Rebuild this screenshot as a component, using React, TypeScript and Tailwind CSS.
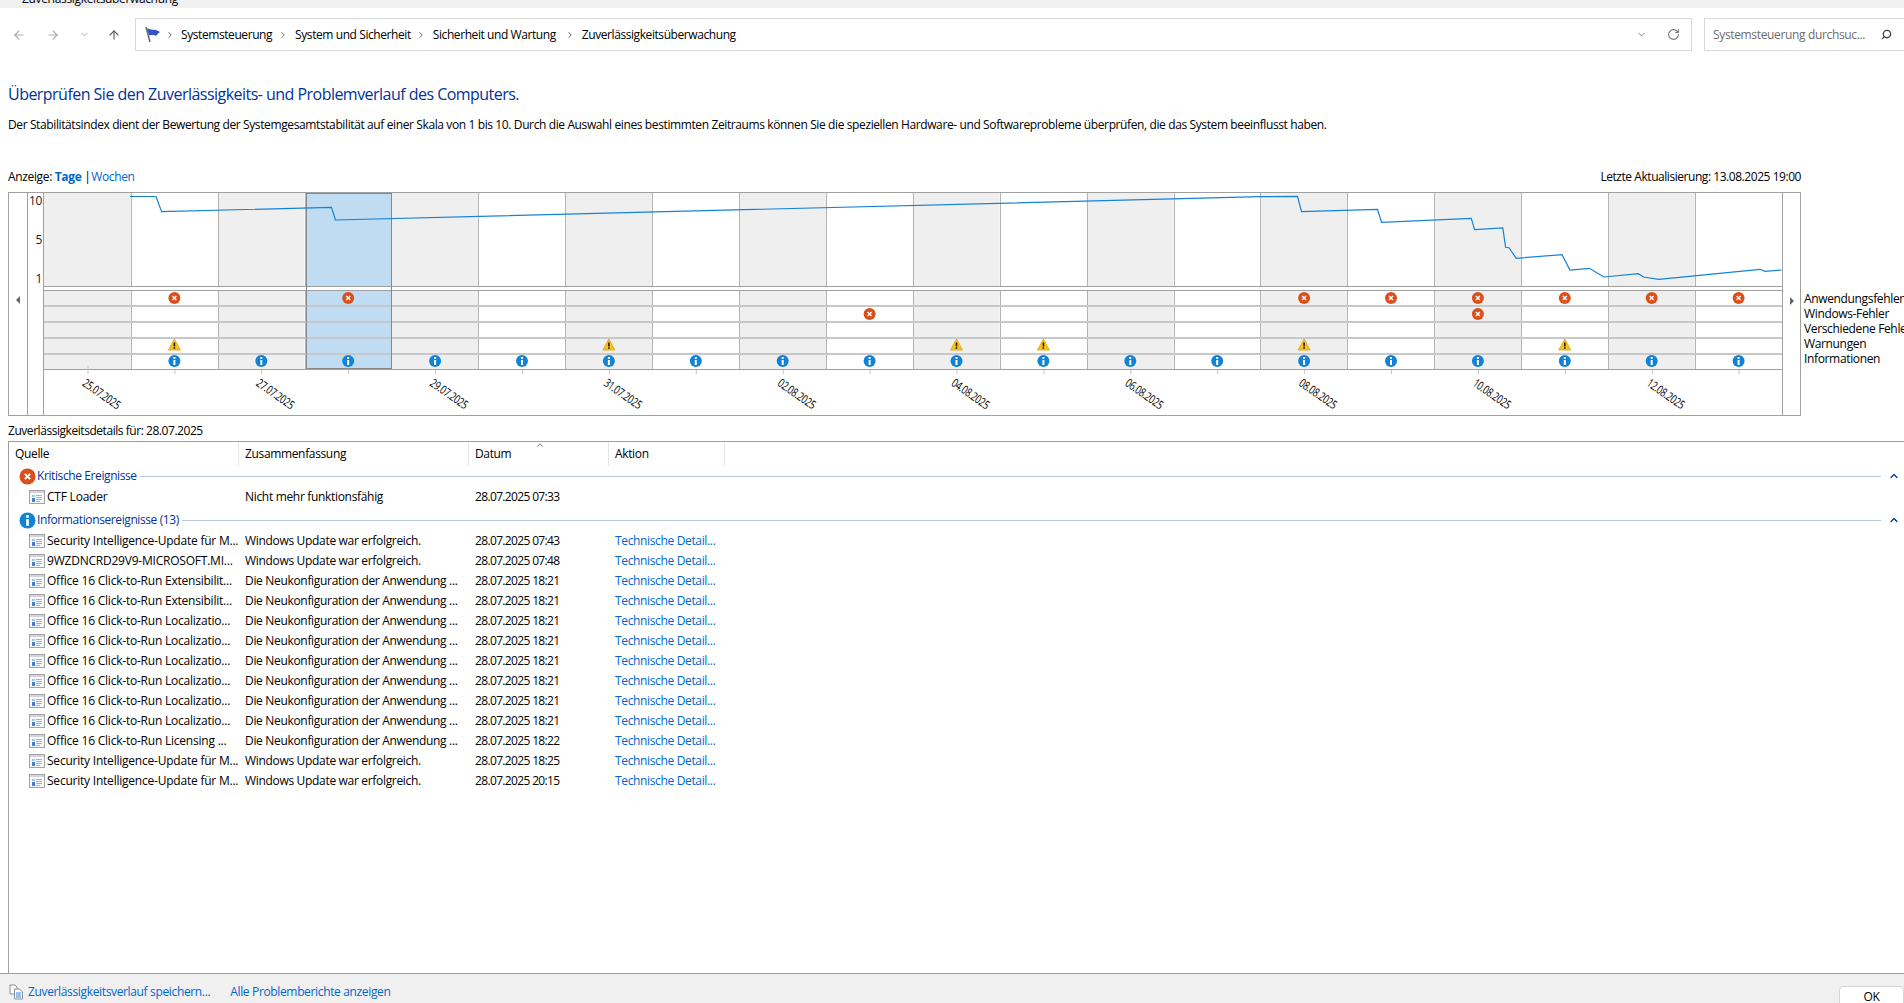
import { ArrowLeft, ArrowRight, ArrowUp, ChevronDown, ChevronRight, ChevronUp, RotateCw, Search } from "lucide-react";

const COLS = Array.from({ length: 20 }, (_, i) => i);
const colX = (i: number) => 43.8 + i * 86.9;
const colC = (i: number) => 87.5 + i * 86.9;

const LINE =
  "130,196.5 156,196.5 161.6,211.7 331.4,207.3 335.5,220 1260,196.7 1297.5,196.3 1301.5,211.7 1377.5,209.3 1381.5,222.3 1471.3,218.3 1474.6,229.7 1502.8,228 1505.6,247.3 1509,247.7 1516.2,258.3 1562,254.7 1570,270 1589.3,268.3 1604,277 1638.3,273.7 1643.6,277 1659,279.3 1760,269.3 1765,271.3 1781.5,270";

const DATES = ["25.07.2025", "27.07.2025", "29.07.2025", "31.07.2025", "02.08.2025", "04.08.2025", "06.08.2025", "08.08.2025", "10.08.2025", "12.08.2025"];

const APP_ERRORS = [1, 3, 14, 15, 16, 17, 18, 19];
const WIN_ERRORS = [9, 16];
const WARNINGS = [1, 6, 10, 11, 14, 17];
const INFOS = COLS.slice(1);

const LEGEND = ["Anwendungsfehler", "Windows-Fehler", "Verschiedene Fehler", "Warnungen", "Informationen"];

const UPDATE_OK = "Windows Update war erfolgreich.";
const RECONF = "Die Neukonfiguration der Anwendung ...";
const EXT = "Office 16 Click-to-Run Extensibilit...";
const LOC = "Office 16 Click-to-Run Localizatio...";
const SEC = "Security Intelligence-Update für M...";

const INFO_ROWS = [
  [SEC, UPDATE_OK, "07:43"],
  ["9WZDNCRD29V9-MICROSOFT.MI...", UPDATE_OK, "07:48"],
  [EXT, RECONF, "18:21"],
  [EXT, RECONF, "18:21"],
  [LOC, RECONF, "18:21"],
  [LOC, RECONF, "18:21"],
  [LOC, RECONF, "18:21"],
  [LOC, RECONF, "18:21"],
  [LOC, RECONF, "18:21"],
  [LOC, RECONF, "18:21"],
  ["Office 16 Click-to-Run Licensing ...", RECONF, "18:22"],
  [SEC, UPDATE_OK, "18:25"],
  [SEC, UPDATE_OK, "20:15"],
];

function ErrorMark({ x, y, r = 6 }: { x: number; y: number; r?: number }) {
  const d = r * 0.33;
  return (
    <g>
      <circle cx={x} cy={y} r={r} fill="#dc4f1c" />
      <path d={`M${x - d} ${y - d}L${x + d} ${y + d}M${x + d} ${y - d}L${x - d} ${y + d}`} stroke="#fff" strokeWidth={r > 6 ? 2 : 1.4} />
    </g>
  );
}

function InfoMark({ x, y, r = 6 }: { x: number; y: number; r?: number }) {
  const s = r / 6;
  return (
    <g>
      <circle cx={x} cy={y} r={r} fill="#1083d6" />
      <rect x={x - 1 * s} y={y - 4 * s} width={2 * s} height={2 * s} fill="#fff" />
      <rect x={x - 1 * s} y={y - 1 * s} width={2 * s} height={5 * s} fill="#fff" />
    </g>
  );
}

function WarnMark({ x, y }: { x: number; y: number }) {
  return (
    <g>
      <path d={`M${x} ${y - 6}L${x + 6} ${y + 5}H${x - 6}Z`} fill="#fbc21a" stroke="#e2a208" strokeWidth={0.8} strokeLinejoin="round" />
      <rect x={x - 0.8} y={y - 2.5} width={1.6} height={4} fill="#222" />
      <rect x={x - 0.8} y={y + 2.2} width={1.6} height={1.6} fill="#222" />
    </g>
  );
}

function Plot() {
  return (
    <svg width={1738} height={222} viewBox="44 193 1738 222" className="block shrink-0">
      {COLS.map((i) =>
        i % 2 === 0 ? (
          <g key={i}>
            <rect x={colX(i)} y={193} width={86.9} height={94} fill="#efefef" />
            <rect x={colX(i)} y={291} width={86.9} height={78} fill="#efefef" />
          </g>
        ) : null,
      )}
      <rect x={306} y={193} width={86} height={94} fill="#bfdcf3" />
      <rect x={306} y={291} width={86} height={78} fill="#bfdcf3" />

      {COLS.slice(1).map((i) => (
        <g key={i} stroke="#b4b4b4" strokeWidth={1}>
          <line x1={Math.round(colX(i)) + 0.5} x2={Math.round(colX(i)) + 0.5} y1={193} y2={287} />
          <line x1={Math.round(colX(i)) + 0.5} x2={Math.round(colX(i)) + 0.5} y1={290} y2={369} />
        </g>
      ))}

      <g stroke="#c8c8c8" strokeWidth={2}>
        <line x1={44} x2={1782} y1={306} y2={306} />
        <line x1={44} x2={1782} y1={322} y2={322} />
        <line x1={44} x2={1782} y1={338} y2={338} />
        <line x1={44} x2={1782} y1={354} y2={354} />
      </g>
      <g stroke="#a0a0a0" strokeWidth={1}>
        <line x1={44} x2={1782} y1={286.5} y2={286.5} />
        <line x1={44} x2={1782} y1={290.5} y2={290.5} />
        <line x1={44} x2={1782} y1={369.5} y2={369.5} />
      </g>

      <rect x={306.5} y={193.5} width={85} height={175} fill="none" stroke="#fff" />
      <rect x={306.5} y={193.5} width={85} height={175} fill="none" stroke="#111" strokeDasharray="1 1" />

      <polyline points={LINE} fill="none" stroke="#1482d8" strokeWidth={1.2} />

      {COLS.map((i) => (
        <line key={i} x1={colC(i) + 0.5} x2={colC(i) + 0.5} y1={i === 0 ? 366 : 370} y2={374} stroke="#c4c4c4" strokeWidth={1} />
      ))}

      {APP_ERRORS.map((i) => <ErrorMark key={i} x={colC(i)} y={298} />)}
      {WIN_ERRORS.map((i) => <ErrorMark key={i} x={colC(i)} y={314} />)}
      {WARNINGS.map((i) => <WarnMark key={i} x={colC(i)} y={345} />)}
      {INFOS.map((i) => <InfoMark key={i} x={colC(i)} y={361} />)}

      {DATES.map((d, n) => {
        const x = colC(n * 2) - 6;
        return (
          <text key={d} x={x} y={385} transform={`rotate(35 ${x} 385)`} fontSize={12} fill="#000" textLength={43} lengthAdjust="spacingAndGlyphs">
            {d}
          </text>
        );
      })}
    </svg>
  );
}

function ListIcon() {
  return (
    <svg width={16} height={14} viewBox="0 0 16 14" className="shrink-0">
      <rect x={0.5} y={0.5} width={15} height={13} fill="#f7f8fa" stroke="#a2a2a2" />
      <rect x={1} y={1} width={14} height={2} fill="#d2d6da" />
      <rect x={3} y={5} width={3} height={2} fill="#a9c3e6" />
      <rect x={3} y={8} width={3} height={4} fill="#3f7fd0" />
      <rect x={7} y={5} width={6} height={1} fill="#a8b2be" />
      <rect x={7} y={7} width={6} height={1} fill="#a8b2be" />
      <rect x={7} y={9} width={6} height={1} fill="#a8b2be" />
      <rect x={7} y={11} width={4} height={1} fill="#a8b2be" />
    </svg>
  );
}

function EventRow({ source, summary, date, action }: { source: string; summary: string; date: string; action?: string }) {
  return (
    <div className="grid h-5 grid-cols-[230px_230px_140px_116px] items-center whitespace-nowrap">
      <div className="flex items-center gap-[2px] pl-[20px] tracking-[-0.22px]">
        <ListIcon />
        <span>{source}</span>
      </div>
      <div className="pl-[6px] tracking-[-0.32px]">{summary}</div>
      <div className="pl-[6px] tracking-[-0.65px]">{date}</div>
      <div className="pl-[6px] text-[#0066cc]">{action}</div>
    </div>
  );
}

function GroupRow({ title, kind }: { title: string; kind: "error" | "info" }) {
  return (
    <div className="flex h-5 items-center pl-[10px] pr-[2px]">
      <svg width={17} height={17} viewBox="0 0 17 17" className="shrink-0">
        {kind === "error" ? <ErrorMark x={8.5} y={8.5} r={8} /> : <InfoMark x={8.5} y={8.5} r={8} />}
      </svg>
      <span className="ml-[1px] whitespace-nowrap tracking-[-0.4px] text-[#003399]">{title}</span>
      <div className="ml-[3px] h-px w-full min-w-0 flex-1 bg-[#b9c6dc]" />
      <ChevronUp size={12} strokeWidth={2.5} className="ml-[7px] mr-[2px] shrink-0 text-[#003399]" />
    </div>
  );
}

export default function App() {
  return (
    <div className="flex h-[1003px] w-[1904px] flex-col overflow-hidden bg-white font-['Open_Sans',sans-serif] text-[12px] leading-4 tracking-[-0.35px] text-black">
      <div className="h-2 shrink-0 overflow-hidden bg-[#f0f0f0] pl-[22px]">
        <div className="-mt-[9px] whitespace-nowrap">Zuverlässigkeitsüberwachung</div>
      </div>

      <div className="mt-[10px] flex h-[33px] shrink-0">
        <div className="flex w-[135px] shrink-0 items-center text-[#a9a9a9]">
          <ArrowLeft size={14} className="ml-[12px]" />
          <ArrowRight size={14} className="ml-[20px]" />
          <ChevronDown size={11} className="ml-[19px]" />
          <ArrowUp size={14} className="ml-[17px] text-[#5f5f5f]" />
        </div>
        <div className="flex w-[1557px] shrink-0 items-center border border-[#d9d9d9] tracking-[-0.42px]">
          <svg width={18} height={18} viewBox="0 0 18 18" className="ml-[8px] shrink-0">
            <path d="M2 1L6 16" stroke="#6d6d6d" strokeWidth={1.6} />
            <path d="M3 2C7 5 10 2 16 6C14 7 13 9 12 10C9 8 7 10 5 9Z" fill="#2f55c8" />
          </svg>
          <ChevronRight size={10} className="ml-[3px] shrink-0 text-[#555]" />
          <span className="ml-[6px] whitespace-nowrap">Systemsteuerung</span>
          <ChevronRight size={10} className="ml-[6px] shrink-0 text-[#555]" />
          <span className="ml-[7px] whitespace-nowrap">System und Sicherheit</span>
          <ChevronRight size={10} className="ml-[5px] shrink-0 text-[#555]" />
          <span className="ml-[7px] whitespace-nowrap">Sicherheit und Wartung</span>
          <ChevronRight size={10} className="ml-[9px] shrink-0 text-[#555]" />
          <span className="ml-[7px] whitespace-nowrap">Zuverlässigkeitsüberwachung</span>
          <ChevronDown size={11} className="ml-auto mr-[20px] shrink-0 text-[#777]" />
          <RotateCw size={13} className="mr-[11px] shrink-0 text-[#777]" />
        </div>
        <div className="ml-3 flex flex-1 items-center border border-r-0 border-[#d9d9d9] pl-[8px] text-[#6d6d6d]">
          <span className="whitespace-nowrap">Systemsteuerung durchsuc...</span>
          <Search size={11} strokeWidth={3} className="ml-auto mr-[12px] -scale-x-100 text-[#444]" />
        </div>
      </div>

      <div className="flex min-h-0 flex-1 flex-col pl-2">
        <h1 className="mt-[32px] text-[16px] leading-[22px] tracking-[-0.53px] text-[#003399]">
          Überprüfen Sie den Zuverlässigkeits- und Problemverlauf des Computers.
        </h1>
        <p className="mt-3 whitespace-nowrap tracking-[-0.385px]">
          Der Stabilitätsindex dient der Bewertung der Systemgesamtstabilität auf einer Skala von 1 bis 10. Durch die Auswahl eines bestimmten Zeitraums können Sie die speziellen Hardware- und Softwareprobleme überprüfen, die das System beeinflusst haben.
        </p>

        <div className="mt-9 flex w-[1793px] justify-between">
          <div>
            Anzeige: <b className="text-[#0066cc]">Tage</b> | <span className="-ml-[2px] text-[#0066cc]">Wochen</span>
          </div>
          <div className="tracking-[-0.45px]">Letzte Aktualisierung: 13.08.2025 19:00</div>
        </div>

        <div className="mt-[7px] flex">
          <div className="flex h-[224px] w-[1793px] shrink-0 border border-[#a0a0a0]">
            <div className="flex w-[19px] shrink-0 items-center justify-center border-r border-[#a0a0a0] pb-[2px]">
              <div className="mb-[6px] h-0 w-0 border-y-[4px] border-r-[4px] border-y-transparent border-r-[#666]" />
            </div>
            <div className="flex w-[16px] shrink-0 flex-col items-end border-r border-[#a0a0a0] pr-[1px] text-[#222]">
              <span className="h-[39px] leading-[16px]">10</span>
              <span className="h-[39px] leading-[16px]">5</span>
              <span className="leading-[16px]">1</span>
            </div>
            <Plot />
            <div className="flex flex-1 items-center justify-center border-l border-[#a0a0a0]">
              <div className="mb-[6px] h-0 w-0 border-y-[4px] border-l-[4px] border-y-transparent border-l-[#666]" />
            </div>
          </div>
          <div className="ml-[3px] mt-[99px] flex flex-col whitespace-nowrap leading-[15px]">
            {LEGEND.map((l) => (
              <span key={l}>{l}</span>
            ))}
          </div>
        </div>

        <div className="mt-[7px] tracking-[-0.45px]">Zuverlässigkeitsdetails für: 28.07.2025</div>

        <div className="relative mt-[2px] min-h-0 flex-1 border-l border-t border-[#a0a0a0]">
          <div className="grid h-[24px] grid-cols-[230px_230px_140px_116px] items-stretch">
            {["Quelle", "Zusammenfassung", "Datum", "Aktion"].map((h) => (
              <div key={h} className="flex items-center border-r border-[#e5e5e5] pl-[6px]">
                {h}
              </div>
            ))}
          </div>
          <ChevronUp size={10} className="absolute left-[526px] top-[-2px] text-[#666]" />

          <GroupRow title="Kritische Ereignisse" kind="error" />
          <div className="mt-px">
            <EventRow source="CTF Loader" summary="Nicht mehr funktionsfähig" date="28.07.2025 07:33" />
          </div>
          <div className="mt-[3px]">
            <GroupRow title="Informationsereignisse (13)" kind="info" />
          </div>
          <div className="mt-px flex flex-col">
            {INFO_ROWS.map(([source, summary, time], i) => (
              <EventRow key={i} source={source} summary={summary} date={`28.07.2025 ${time}`} action="Technische Detail..." />
            ))}
          </div>
        </div>
      </div>

      <div className="flex h-[30px] shrink-0 items-center overflow-hidden border-t border-[#a0a0a0] bg-[#f0f0f0] pt-[6px]">
        <svg width={15} height={16} viewBox="0 0 15 16" className="ml-[9px] shrink-0">
          <path d="M1 1H6L8 3V10H1Z" fill="#fafafa" stroke="#8f8f8f" />
          <path d="M5.5 5H10.5L13.5 8V15H5.5Z" fill="#fff" stroke="#7f8fa5" />
          <path d="M7 9H12M7 11H12M7 13H12" stroke="#3f7fd0" />
        </svg>
        <span className="ml-[4px] whitespace-nowrap text-[#0066cc]">Zuverlässigkeitsverlauf speichern...</span>
        <span className="ml-[20px] whitespace-nowrap text-[#0066cc]">Alle Problemberichte anzeigen</span>
        <div className="ml-auto mt-[18px] flex h-[30px] w-[65px] shrink-0 justify-center rounded-t-[4px] border border-[#d4d4d4] bg-white pt-[2px]">
          OK
        </div>
      </div>
    </div>
  );
}
